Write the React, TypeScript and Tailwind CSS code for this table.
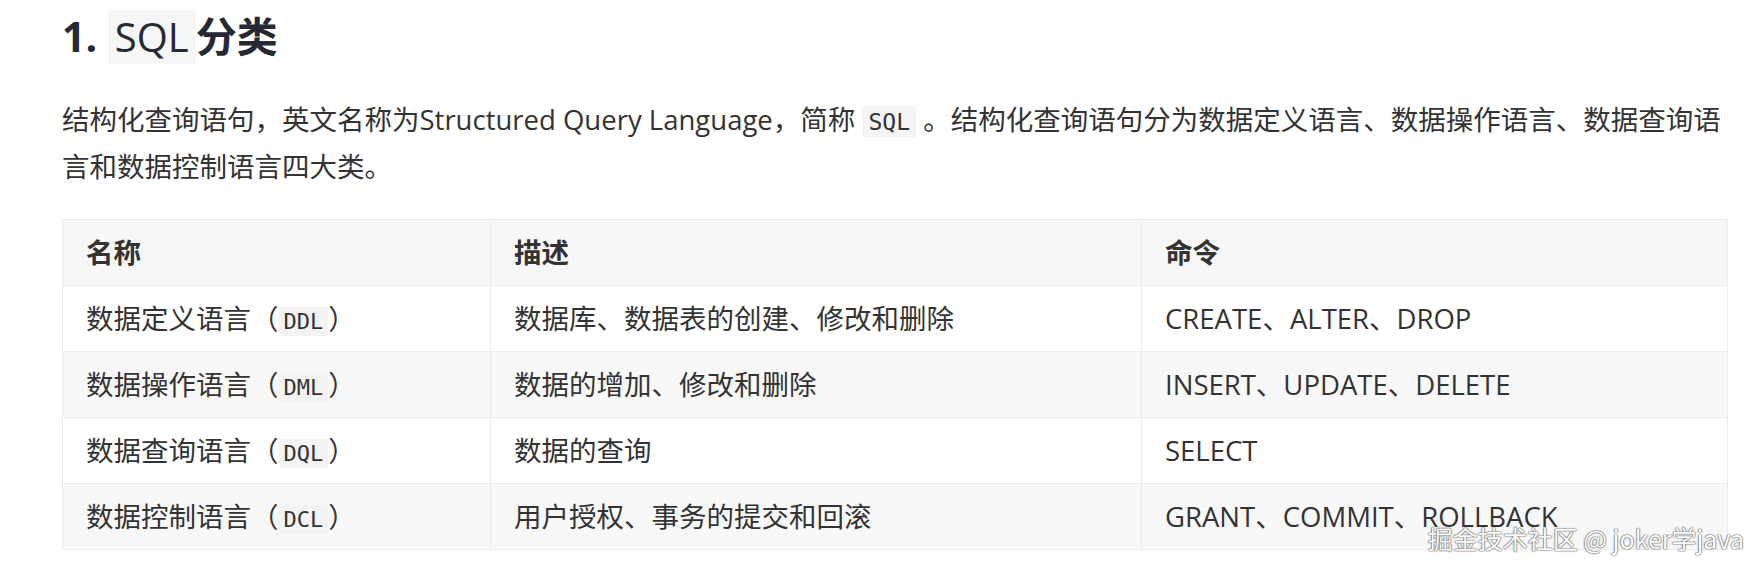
const rows = [
  { name: "数据定义语言", code: "DDL", desc: "数据库、数据表的创建、修改和删除", cmd: "CREATE、ALTER、DROP" },
  { name: "数据操作语言", code: "DML", desc: "数据的增加、修改和删除", cmd: "INSERT、UPDATE、DELETE" },
  { name: "数据查询语言", code: "DQL", desc: "数据的查询", cmd: "SELECT" },
  { name: "数据控制语言", code: "DCL", desc: "用户授权、事务的提交和回滚", cmd: "GRANT、COMMIT、ROLLBACK" },
];

const mono = "font-['DejaVu_Sans_Mono',monospace]";

export default function App() {
  return (
    <div className="relative h-[573px] w-[1762px] overflow-hidden bg-white font-['Open_Sans','Noto_Sans_CJK_SC',sans-serif] text-[#333]">
      <div className="w-[1727px] pl-[62px] pt-[8px]">
        <h2 className="text-[41px] font-bold leading-[56px] text-[#252933]">
          1.{" "}
          <code className="inline-block rounded-[4px] bg-[#f6f6f6] px-[7px] font-['Open_Sans',sans-serif] text-[40px] font-normal leading-[54px]">
            SQL
          </code>
          分类
        </h2>

        <p className="mt-[32px] text-[27.5px] leading-[47px]">
          结构化查询语句，英文名称为Structured Query Language，简称{" "}
          <code className={`${mono} rounded-[4px] bg-[#f5f5f5] px-[6px] py-[3px] text-[23px] leading-none`}>SQL</code>{" "}
          。结构化查询语句分为数据定义语言、数据操作语言、数据查询语言和数据控制语言四大类。
        </p>

        <table className="mt-[29px] w-[1665px] table-fixed border-collapse border border-[#ececec] text-[27.5px]">
          <colgroup>
            <col className="w-[428px]" />
            <col className="w-[651px]" />
            <col className="w-[586px]" />
          </colgroup>
          <thead>
            <tr className="h-[66px] bg-[#f7f7f7] text-left">
              <th className="border border-[#ececec] pl-[23px] font-bold">名称</th>
              <th className="border border-[#ececec] pl-[23px] font-bold">描述</th>
              <th className="border border-[#ececec] pl-[23px] font-bold">命令</th>
            </tr>
          </thead>
          <tbody>
            {rows.map((r, i) => (
              <tr key={r.code} className={`h-[66px] ${i % 2 === 1 ? "bg-[#f8f8f8]" : "bg-white"}`}>
                <td className="border border-[#ececec] pl-[23px]">
                  {r.name}（<code className={`${mono} rounded-[3px] bg-[#f3f3f3] px-[5px] py-[2px] text-[22px] leading-none`}>{r.code}</code>）
                </td>
                <td className="border border-[#ececec] pl-[23px]">{r.desc}</td>
                <td className="border border-[#ececec] pl-[23px]">{r.cmd}</td>
              </tr>
            ))}
          </tbody>
        </table>
      </div>

      <div className="absolute right-[18px] top-[521px] font-['Noto_Sans_CJK_SC',sans-serif] text-[25px] leading-[34px] text-white [text-shadow:0_0_1px_#555,0_0_1px_#555,0_0_2px_#777]">
        掘金技术社区 @ joker学java
      </div>
    </div>
  );
}
